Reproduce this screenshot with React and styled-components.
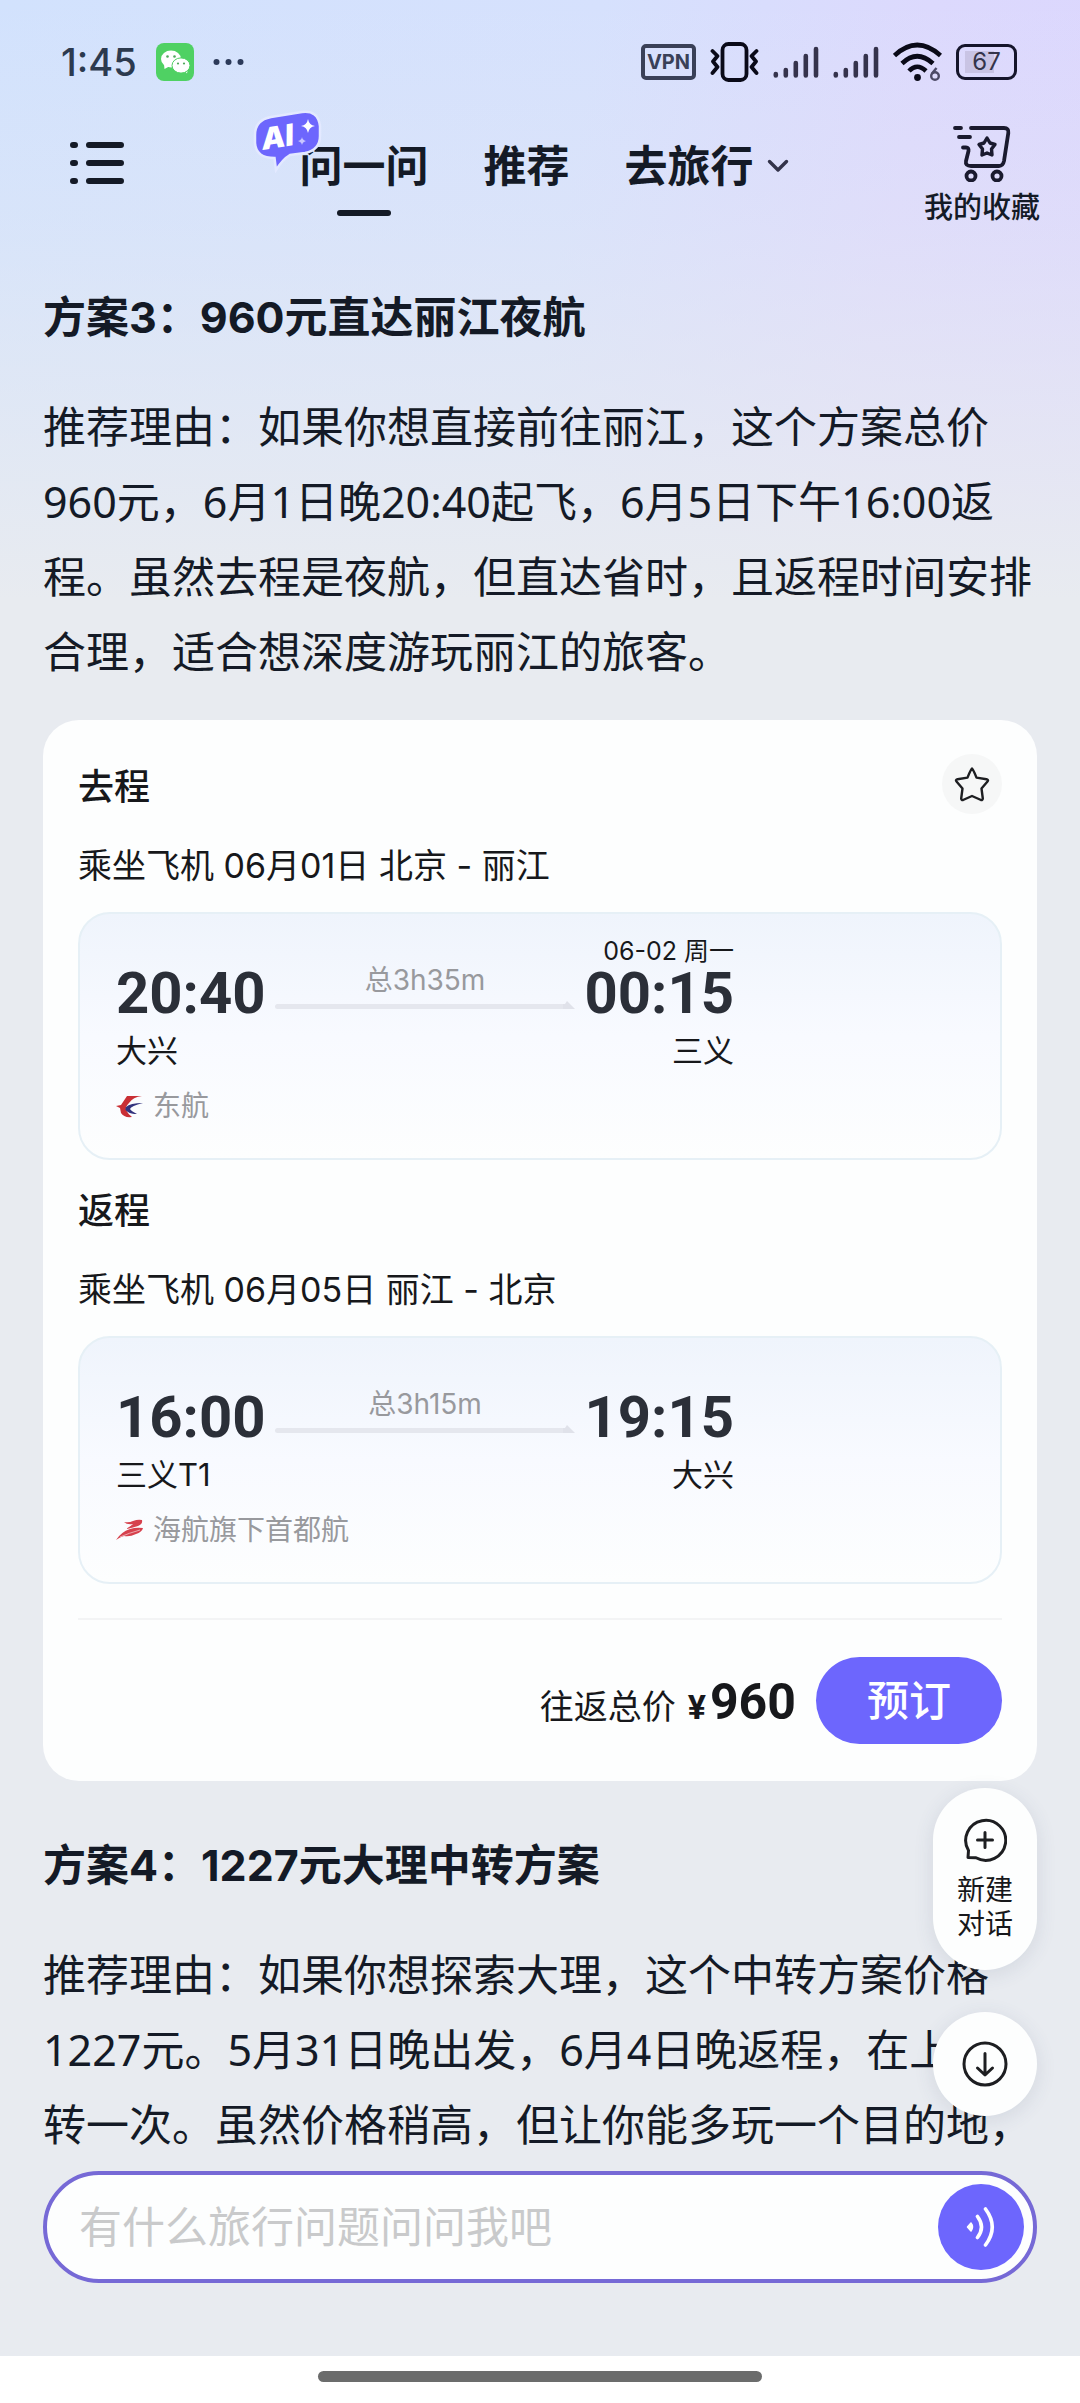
import React, { useState } from 'react';
import styled, { createGlobalStyle, ThemeProvider } from 'styled-components';

const theme = {
  colors: {
    ink: '#141a26',
    text: '#17181b',
    time: '#2b2f38',
    muted: '#98999d',
    placeholder: '#c9cacb',
    accent: '#6d66fd',
    outline: '#7669d6',
    page: '#e8ebf0',
    card: '#fdfefe',
  },
  fonts: {
    body: "Inter, 'Noto Sans CJK SC', sans-serif",
    prose: "'Noto Sans', 'Noto Sans CJK SC', sans-serif",
    digits: "Roboto, 'Noto Sans CJK SC', sans-serif",
  },
  gutter: '43px',
};

const GlobalStyle = createGlobalStyle`
  *, *::before, *::after {
    box-sizing: border-box;
  }

  body {
    margin: 0;
    font-family: ${theme.fonts.body};
    color: ${theme.colors.ink};
    -webkit-font-smoothing: antialiased;
  }

  h2, h3, p {
    margin: 0;
  }

  button, input {
    font: inherit;
    color: inherit;
    border: 0;
    padding: 0;
    background: none;
  }

  button {
    cursor: pointer;
  }
`;

const Page = styled.div`
  display: flex;
  flex-direction: column;
  min-height: 100vh;
  background: linear-gradient(
      to bottom,
      rgba(232, 235, 240, 0) 0,
      rgba(232, 235, 240, 0.25) 220px,
      ${({ theme }) => theme.colors.page} 600px
    ),
    linear-gradient(100deg, #d2e2fd 0, #d6e1fd 40%, #dcd9fd 62%, #dbd3ff 100%);
`;

const StatusBar = styled.div`
  display: flex;
  align-items: center;
  justify-content: space-between;
  height: 124px;
  padding: 0 63px 0 61px;
`;

const StatusGroup = styled.div`
  display: flex;
  align-items: center;
  gap: ${({ $gap }) => $gap};
`;

const Clock = styled.span`
  font-size: 38px;
  font-weight: 500;
  line-height: 48px;
  color: #2c3a4f;
`;

const VpnTag = styled.span`
  width: 55px;
  height: 36px;
  border: 4px solid #3a4057;
  border-radius: 5px;
  font-size: 20px;
  font-weight: 700;
  line-height: 28px;
  text-align: center;
  color: #3a4057;
`;

const Battery = styled.span`
  width: 61px;
  height: 36px;
  border: 3px solid #15152a;
  border-radius: 9px;
  background: linear-gradient(to right, #c9c4e4 67%, transparent 67%) content-box;
  padding: 4px 6px;
  font-size: 24px;
  line-height: 22px;
  text-align: center;
  color: #34344a;
`;

const NavBar = styled.header`
  display: grid;
  grid-template-columns: 1fr auto 1fr;
  align-items: start;
  height: 108px;
  padding: 0 40px 0 48px;
`;

const MenuButton = styled.button`
  justify-self: start;
  display: flex;
  margin-left: 22px;
  padding-top: 18px;
`;

const Tabs = styled.nav`
  display: flex;
  gap: 55px;
`;

const Tab = styled.button`
  position: relative;
  display: flex;
  align-items: center;
  gap: 13px;
  height: 92px;
  padding-bottom: 8px;
  font-size: 43px;
  font-weight: 600;
  line-height: 84px;

  &[aria-current='page']::after {
    content: '';
    position: absolute;
    left: 50%;
    bottom: 0;
    width: 54px;
    height: 6px;
    margin-left: -27px;
    border-radius: 3px;
    background: ${({ theme }) => theme.colors.ink};
  }
`;

const AiBadge = styled.svg`
  position: absolute;
  left: -48px;
  top: -15px;
`;

const Favorites = styled.button`
  justify-self: end;
  display: flex;
  flex-direction: column;
  align-items: center;
  font-size: 29px;
  font-weight: 500;
  line-height: 40px;
  gap: 6px;
`;

const Main = styled.main`
  flex: 1;
  padding: 55px ${({ theme }) => theme.gutter} 9px;
`;

const Plan = styled.section`
  & + & {
    margin-top: 54px;
  }
`;

const PlanTitle = styled.h2`
  font-size: 43px;
  font-weight: 700;
  line-height: 60px;
`;

const PlanText = styled.p`
  margin-top: 42px;
  font-family: ${({ theme }) => theme.fonts.prose};
  font-size: 43px;
  line-height: 75px;
`;

const Card = styled.div`
  margin-top: 31px;
  padding: 34px 35px 37px;
  border-radius: 36px;
  background: ${({ theme }) => theme.colors.card};
  color: ${({ theme }) => theme.colors.text};
`;

const Leg = styled.section`
  & + & {
    margin-top: 18px;
  }
`;

const LegHeader = styled.div`
  display: flex;
  align-items: flex-start;
  justify-content: space-between;
`;

const LegTitle = styled.h3`
  font-size: 36px;
  font-weight: 500;
  line-height: 66px;
`;

const StarButton = styled.button`
  display: flex;
  align-items: center;
  justify-content: center;
  width: 60px;
  height: 60px;
  border-radius: 50%;
  background: #f6f7f7;
`;

const LegRoute = styled.p`
  margin: 22px 0;
  font-size: 34px;
  line-height: 48px;
`;

const FlightPanel = styled.div`
  padding: 23px 36px 34px;
  border: 2px solid #e6f0f6;
  border-radius: 32px;
  background: linear-gradient(to bottom, #eff4fc 0, #f8faff 50%, #fdfefe 100%);
`;

const Flight = styled.div`
  display: flex;
  max-width: 618px;
`;

const Endpoint = styled.div`
  display: flex;
  flex-direction: column;
  text-align: ${({ $align }) => $align};
`;

const DayNote = styled.span`
  min-height: 28px;
  font-size: 25px;
  line-height: 28px;
`;

const Time = styled.span`
  font-family: ${({ theme }) => theme.fonts.digits};
  font-size: 58px;
  font-weight: 700;
  line-height: 56px;
  color: ${({ theme }) => theme.colors.time};
`;

const Station = styled.span`
  margin-top: 10px;
  font-size: 31px;
  line-height: 40px;
`;

const Duration = styled.div`
  flex: 1;
  margin: 25px 10px 0;
  text-align: center;
  font-size: 28px;
  line-height: 36px;
  color: ${({ theme }) => theme.colors.muted};
`;

const Track = styled.div`
  display: flex;
  align-items: flex-end;
  height: 11px;

  &::before {
    content: '';
    flex: 1;
    height: 5px;
    border-radius: 3px 0 0 3px;
    background: #e5e7ee;
  }
`;

const Airline = styled.div`
  display: flex;
  align-items: center;
  gap: 10px;
  margin-top: 17px;
  font-size: 28px;
  line-height: 36px;
  color: ${({ theme }) => theme.colors.muted};
`;

const CardFooter = styled.div`
  display: flex;
  align-items: center;
  justify-content: flex-end;
  gap: 20px;
  margin-top: 34px;
  padding-top: 37px;
  border-top: 2px solid #f3f4f5;
`;

const Total = styled.p`
  display: flex;
  align-items: baseline;
  padding-top: 8px;
  font-size: 34px;
  line-height: 60px;
`;

const Price = styled.strong`
  margin-left: 12px;
  font-family: ${({ theme }) => theme.fonts.digits};
  font-size: 50px;
  font-weight: 700;

  small {
    margin-right: 4px;
    font-size: 34px;
  }
`;

const BookButton = styled.button`
  width: 186px;
  height: 87px;
  border-radius: 44px;
  background: ${({ theme }) => theme.colors.accent};
  color: #fff;
  font-size: 42px;
  font-weight: 500;
  line-height: 60px;
`;

const Footer = styled.footer`
  position: relative;
  padding: 0 ${({ theme }) => theme.gutter} 73px;
`;

const Composer = styled.form`
  display: flex;
  align-items: center;
  height: 112px;
  padding: 0 9px 0 32px;
  border: 4px solid ${({ theme }) => theme.colors.outline};
  border-radius: 56px;
  background: ${({ theme }) => theme.colors.card};
`;

const Question = styled.input`
  flex: 1;
  min-width: 0;
  height: 75px;
  font-size: 43px;
  outline: none;

  &::placeholder {
    color: ${({ theme }) => theme.colors.placeholder};
    opacity: 1;
  }
`;

const VoiceButton = styled.button`
  display: flex;
  align-items: center;
  justify-content: center;
  width: 86px;
  height: 86px;
  border-radius: 50%;
  background: ${({ theme }) => theme.colors.accent};
`;

const FloatingActions = styled.div`
  position: absolute;
  right: ${({ theme }) => theme.gutter};
  bottom: 100%;
  display: flex;
  flex-direction: column;
  gap: 42px;
  padding-bottom: 55px;
`;

const FloatingButton = styled.button`
  display: flex;
  flex-direction: column;
  align-items: center;
  justify-content: center;
  gap: 11px;
  width: 104px;
  height: ${({ $height }) => $height};
  border-radius: 52px;
  background: #fdfefe;
  box-shadow: 0 4px 20px rgba(60, 70, 110, 0.12);
  font-size: 28px;
  line-height: 34px;
  color: ${({ theme }) => theme.colors.text};
`;

const HomeBar = styled.div`
  display: flex;
  justify-content: center;
  height: 47px;
  padding-top: 15px;
  background: #fff;

  &::before {
    content: '';
    width: 444px;
    height: 11px;
    border-radius: 6px;
    background: #6b6c6c;
  }
`;

const WeChatIcon = () => (
  <svg width='38' height='38' viewBox='0 0 38 38' aria-hidden='true'>
    <rect width='38' height='38' rx='8' fill='#4fd163' />
    <path d='M8 21 L8.500 26 L14 23Z M28 27 L31 30.500 L32 25Z' fill='#fff' />
    <ellipse cx='15' cy='16' rx='10' ry='8.500' fill='#fff' />
    <ellipse cx='25' cy='22.500' rx='9' ry='7.600' fill='#fff' stroke='#4fd163' strokeWidth='1' />
    <g fill='#4fa85c'>
      <circle cx='11.500' cy='13.500' r='1.300' />
      <circle cx='18.500' cy='13.500' r='1.300' />
      <circle cx='22' cy='20.500' r='1.100' />
      <circle cx='28' cy='20.500' r='1.100' />
    </g>
  </svg>
);

const MoreDots = () => (
  <svg width='31' height='8' viewBox='0 0 31 8' fill='#2c3a5a' aria-hidden='true'>
    <circle cx='3.500' cy='4' r='3' />
    <circle cx='15.500' cy='4' r='3' />
    <circle cx='27.500' cy='4' r='3' />
  </svg>
);

const VibrateIcon = () => (
  <svg
    width='49'
    height='40'
    viewBox='0 0 49 40'
    fill='none'
    stroke='#0a0a18'
    strokeWidth='3.800'
    strokeLinecap='round'
    strokeLinejoin='round'
    aria-hidden='true'
  >
    <rect x='12.500' y='2' width='24' height='36' rx='6' />
    <path d='M2.500 9 L7.500 14 L3 19.500 L7.500 25 L2.500 31' />
    <path d='M46.500 9 L41.500 14 L46 19.500 L41.500 25 L46.500 31' />
  </svg>
);

const SignalIcon = () => (
  <svg
    width='46'
    height='34'
    viewBox='0 0 46 34'
    stroke='#35334c'
    strokeWidth='4.600'
    strokeLinecap='round'
    aria-hidden='true'
  >
    <path d='M2.800 29 V30.500 M12.800 25 V30.500 M22.800 18 V30.500 M32.800 11 V30.500 M43 4 V30.500' />
  </svg>
);

const WifiIcon = () => (
  <svg width='49' height='40' viewBox='0 0 49 40' fill='none' aria-hidden='true'>
    <g stroke='#0a0a18' strokeWidth='4.600'>
      <path d='M1.500 13.500 Q24 -7.500 47.500 13.500' />
      <path d='M9 21.500 Q24 7 40 21.500' />
      <path d='M16 29 Q24 20.500 33 29' />
    </g>
    <circle cx='24.500' cy='35.500' r='3.400' fill='#0a0a18' />
    <circle cx='42' cy='34' r='3.800' stroke='#4c4a66' strokeWidth='2.400' />
    <path d='M39 31.500 L43.500 26' stroke='#4c4a66' strokeWidth='2.400' />
  </svg>
);

const MenuIcon = () => (
  <svg
    width='54'
    height='42'
    viewBox='0 0 54 42'
    stroke='#141a26'
    strokeWidth='6'
    strokeLinecap='round'
    aria-hidden='true'
  >
    <path d='M3 3 H5 M3 21 H5 M3 39 H5 M19 3 H51 M19 21 H51 M19 39 H51' />
  </svg>
);

const ChevronIcon = () => (
  <svg width='22' height='14' viewBox='0 0 22 14' fill='none' aria-hidden='true'>
    <path
      d='M2.500 2.500 L11 11 L19.500 2.500'
      stroke='#33334a'
      strokeWidth='3.400'
      strokeLinecap='round'
      strokeLinejoin='round'
    />
  </svg>
);

const CartIcon = () => (
  <svg
    width='58'
    height='58'
    viewBox='0 0 58 58'
    fill='none'
    stroke='#1a1a2e'
    strokeWidth='3.800'
    strokeLinecap='round'
    strokeLinejoin='round'
    aria-hidden='true'
  >
    <path d='M2 4 H8 M6 13 H17' />
    <path d='M18 4 H51 Q56 4 55.300 9 L51 37 Q50 42 46 42 H18 Q12 42 13 37 L15.500 27 Q16 23.500 13 23.500 H10' />
    <path
      strokeWidth='3.400'
      d='M34 14 L37 19 L42 20.500 L38.500 25 L39 31 L34 29 L29 31 L29.500 25 L26 20.500 L31 19 Z'
    />
    <circle cx='18' cy='52' r='4.500' />
    <circle cx='44' cy='52' r='4.500' />
  </svg>
);

const StarIcon = () => (
  <svg width='36' height='36' viewBox='0 0 36 36' fill='none' aria-hidden='true'>
    <path
      d='M18 2.500 Q18.800 2.500 22.500 11.600 L32.500 13.200 Q35 14 33.500 15.500 L27.500 22.500 L28.800 32.500 Q28.500 34.500 27 34 L18 30 L9 34 Q7.500 34.500 7.200 32.500 L8.500 22.500 L2.500 15.500 Q1 14 3.500 13.200 L13.500 11.600 Q17.200 2.500 18 2.500 Z'
      stroke='#1d1e21'
      strokeWidth='2.400'
      strokeLinejoin='round'
    />
  </svg>
);

const TrackHead = () => (
  <svg width='12' height='8' viewBox='0 0 12 8' aria-hidden='true'>
    <path d='M0 3 H2 L4 0 L12 8 H0 Z' fill='#e0e2ea' />
  </svg>
);

const EasternLogo = () => (
  <svg width='27' height='23' viewBox='0 0 27 23' aria-hidden='true'>
    <path d='M11 1 H26 Q17 2 13 8 Q9 12 10 15 Q12 19 16 22 Q8 23 5 18 L4 13 L0 11 L5 10 Z' fill='#c92f35' />
    <path d='M27 8 Q14 8 10 12 Q8 15 12 17 Q15 19 21 19 Q15 16 14 14 Q15 11 27 8 Z' fill='#33337e' />
  </svg>
);

const CapitalLogo = () => (
  <svg width='27' height='22' viewBox='0 0 27 22' aria-hidden='true'>
    <path d='M0 21 Q5 13 14 10 Q20 8 27 9 Q26 13 20 15 Q14 18 8 17 Q4 18 0 21 Z' fill='#d6414d' />
    <path d='M8 3 Q13 4 17 2 Q22 0 26 1 Q27 5 22 7 Q16 9 10 10 Q15 7 17 5 Q11 6 8 3 Z' fill='#d6414d' />
    <path d='M4 18 Q13 14 24 11' stroke='#f3c3c8' strokeWidth='0.800' fill='none' />
  </svg>
);

const NewChatIcon = () => (
  <svg
    width='44'
    height='44'
    viewBox='0 0 44 44'
    fill='none'
    stroke='#1d1e21'
    strokeWidth='3'
    strokeLinecap='round'
    strokeLinejoin='round'
    aria-hidden='true'
  >
    <path d='M5.500 32.500 A20 20 0 1 1 13 39.800 L5 39.500 Z' />
    <path d='M22 14.500 V29.500 M14.500 22 H29.500' />
  </svg>
);

const ArrowDownIcon = () => (
  <svg
    width='46'
    height='46'
    viewBox='0 0 46 46'
    fill='none'
    stroke='#1d1e21'
    strokeWidth='3'
    strokeLinecap='round'
    strokeLinejoin='round'
    aria-hidden='true'
  >
    <circle cx='23' cy='23' r='21' />
    <path d='M23 12.500 V33.500 M15.500 27 L23 34 L30.500 27' />
  </svg>
);

const VoiceIcon = () => (
  <svg width='30' height='40' viewBox='0 0 30 40' fill='none' aria-hidden='true'>
    <path d='M1.500 20 L5 16 Q8 20 5 24 Z' fill='#fff' stroke='#fff' strokeWidth='1.500' strokeLinejoin='round' />
    <path
      d='M11.500 9.500 Q19.500 20 11.500 30.500 M19.500 2 Q33 20 19.500 38'
      stroke='#fff'
      strokeWidth='3.600'
      strokeLinecap='round'
    />
  </svg>
);

const AiBubble = () => (
  <AiBadge width='72' height='64' viewBox='0 0 72 64' aria-hidden='true'>
    <path
      d='M19 8 L50 3 Q66 1 68 17 V27 Q68 41 53 44 L38 46 Q31 50 24 61 L22.500 49 Q4 49 3 34 V26 Q3 11 19 8 Z'
      fill='#6d66fd'
      stroke='#e3e9ff'
      strokeWidth='2.500'
    />
    <text
      x='11'
      y='41'
      transform='rotate(-9 11 41)'
      fill='#fff'
      fontFamily='Inter, sans-serif'
      fontSize='30'
      fontWeight='900'
      fontStyle='italic'
    >
      AI
    </text>
    <path d='M56 10 Q57 16 63 17 Q57 18 56 24 Q55 18 49 17 Q55 16 56 10 Z' fill='#fff' />
    <path d='M50 28 Q50.500 31 54 32 Q50.500 33 50 36 Q49.500 33 46 32 Q49.500 31 50 28 Z' fill='#c9c6ff' />
  </AiBadge>
);

const legs = [
  {
    title: '去程',
    route: '乘坐飞机 06月01日 北京 - 丽江',
    departs: { time: '20:40', station: '大兴' },
    arrives: { time: '00:15', station: '三义', day: '06-02 周一' },
    duration: '总3h35m',
    airline: '东航',
    Logo: EasternLogo,
  },
  {
    title: '返程',
    route: '乘坐飞机 06月05日 丽江 - 北京',
    departs: { time: '16:00', station: '三义T1' },
    arrives: { time: '19:15', station: '大兴' },
    duration: '总3h15m',
    airline: '海航旗下首都航',
    Logo: CapitalLogo,
  },
];

const FlightEndpoint = ({ time, station, day, align }) => (
  <Endpoint $align={align}>
    <DayNote>{day}</DayNote>
    <Time>{time}</Time>
    <Station>{station}</Station>
  </Endpoint>
);

const FlightLeg = ({ title, route, departs, arrives, duration, airline, Logo, action }) => (
  <Leg>
    <LegHeader>
      <LegTitle>{title}</LegTitle>
      {action}
    </LegHeader>
    <LegRoute>{route}</LegRoute>
    <FlightPanel>
      <Flight>
        <FlightEndpoint {...departs} align='left' />
        <Duration>
          {duration}
          <Track>
            <TrackHead />
          </Track>
        </Duration>
        <FlightEndpoint {...arrives} align='right' />
      </Flight>
      <Airline>
        <Logo />
        {airline}
      </Airline>
    </FlightPanel>
  </Leg>
);

const App = () => {
  const [question, setQuestion] = useState('');

  return (
    <ThemeProvider theme={theme}>
      <GlobalStyle />
      <Page>
        <StatusBar>
          <StatusGroup $gap='19px'>
            <Clock>1:45</Clock>
            <WeChatIcon />
            <MoreDots />
          </StatusGroup>
          <StatusGroup $gap='14px'>
            <VpnTag>VPN</VpnTag>
            <VibrateIcon />
            <SignalIcon />
            <SignalIcon />
            <WifiIcon />
            <Battery>67</Battery>
          </StatusGroup>
        </StatusBar>

        <NavBar>
          <MenuButton type='button' aria-label='菜单'>
            <MenuIcon />
          </MenuButton>
          <Tabs>
            <Tab type='button' aria-current='page'>
              问一问
              <AiBubble />
            </Tab>
            <Tab type='button'>推荐</Tab>
            <Tab type='button' aria-haspopup='menu'>
              去旅行
              <ChevronIcon />
            </Tab>
          </Tabs>
          <Favorites type='button'>
            <CartIcon />
            我的收藏
          </Favorites>
        </NavBar>

        <Main>
          <Plan>
            <PlanTitle>方案3：960元直达丽江夜航</PlanTitle>
            <PlanText>
              推荐理由：如果你想直接前往丽江，这个方案总价960元，6月1日晚20:40起飞，6月5日下午16:00返程。虽然去程是夜航，但直达省时，且返程时间安排合理，适合想深度游玩丽江的旅客。
            </PlanText>
            <Card>
              {legs.map((leg, index) => (
                <FlightLeg
                  key={leg.title}
                  {...leg}
                  action={
                    index === 0 && (
                      <StarButton type='button' aria-label='收藏'>
                        <StarIcon />
                      </StarButton>
                    )
                  }
                />
              ))}
              <CardFooter>
                <Total>
                  往返总价
                  <Price>
                    <small>¥</small>960
                  </Price>
                </Total>
                <BookButton type='button'>预订</BookButton>
              </CardFooter>
            </Card>
          </Plan>

          <Plan>
            <PlanTitle>方案4：1227元大理中转方案</PlanTitle>
            <PlanText>
              推荐理由：如果你想探索大理，这个中转方案价格1227元。5月31日晚出发，6月4日晚返程，在上海
              <br />
              转一次。虽然价格稍高，但让你能多玩一个目的地，
            </PlanText>
          </Plan>
        </Main>

        <Footer>
          <FloatingActions>
            <FloatingButton type='button' $height='182px'>
              <NewChatIcon />
              <span>
                新建
                <br />
                对话
              </span>
            </FloatingButton>
            <FloatingButton type='button' $height='104px' aria-label='回到底部'>
              <ArrowDownIcon />
            </FloatingButton>
          </FloatingActions>
          <Composer onSubmit={(event) => event.preventDefault()}>
            <Question
              type='text'
              aria-label='旅行问题'
              placeholder='有什么旅行问题问问我吧'
              value={question}
              onChange={(event) => setQuestion(event.target.value)}
            />
            <VoiceButton type='button' aria-label='语音输入'>
              <VoiceIcon />
            </VoiceButton>
          </Composer>
        </Footer>
        <HomeBar />
      </Page>
    </ThemeProvider>
  );
};

export default App;
